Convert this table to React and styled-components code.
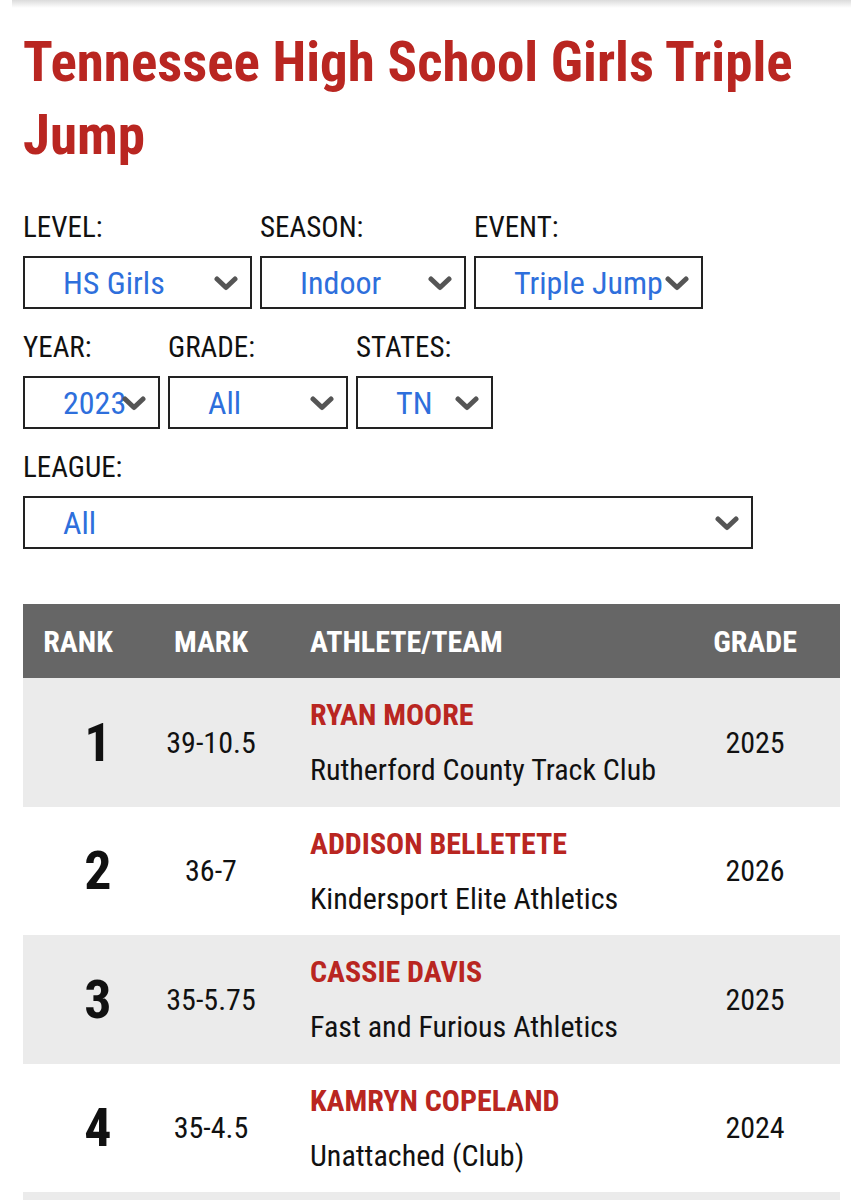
import React from 'react';
import styled, { createGlobalStyle } from 'styled-components';

const GlobalStyle = createGlobalStyle`
  body {
    margin: 0;
    background: #fff;
    font-family: "Roboto Condensed", Roboto, "Liberation Sans", sans-serif;
    font-stretch: condensed;
    color: #111;
  }
`;

const Shade = styled.div`
  height: 8px;
  margin: 0 12px;
  background: linear-gradient(to bottom, rgba(0, 0, 0, 0.14), rgba(0, 0, 0, 0));
`;

const Page = styled.div`
  padding: 0 23px 40px;
`;

const Title = styled.h1`
  margin: 18px 0 0;
  font-size: 55px;
  line-height: 73px;
  font-weight: 700;
  color: #b92621;
`;

const FilterRow = styled.div`
  display: flex;
  gap: 8px;
  margin-top: ${(p) => p.top}px;
`;

const Field = styled.div`
  display: flex;
  flex-direction: column;
  width: ${(p) => p.width}px;
`;

const Label = styled.div`
  font-size: 29px;
  line-height: 30px;
  color: #111;
  margin-bottom: 14px;
`;

const Select = styled.div`
  position: relative;
  height: 53px;
  box-sizing: border-box;
  border: 2px solid #222;
  display: flex;
  align-items: center;
  padding-left: 38px;
  font-size: 32px;
  color: #2e6fdc;
  white-space: nowrap;
  overflow: hidden;
`;

const Chevron = styled.svg`
  position: absolute;
  right: 12px;
  top: 50%;
  margin-top: -7px;
  width: 24px;
  height: 15px;
`;

const Table = styled.div`
  margin-top: 55px;
`;

const Grid = styled.div`
  display: grid;
  grid-template-columns: 120px 136px 391px 1fr;
  align-items: center;
  background: ${(p) => p.bg};
  height: ${(p) => p.h}px;
`;

const Th = styled.div`
  color: #fff;
  font-weight: 700;
  font-size: 30px;
  text-align: ${(p) => (p.left ? 'left' : 'center')};
  padding-left: ${(p) => p.pad || 0}px;
  padding-right: ${(p) => p.padR || 0}px;
`;

const Rank = styled.div`
  font-size: 54px;
  font-weight: 700;
  text-align: center;
  padding-left: 30px;
`;

const Cell = styled.div`
  font-size: 30px;
  text-align: center;
`;

const Athlete = styled.div`
  padding-left: 31px;
  display: flex;
  flex-direction: column;
  gap: 20px;
`;

const Name = styled.div`
  color: #b92621;
  font-weight: 700;
  font-size: 30px;
  line-height: 35px;
  text-transform: uppercase;
`;

const Team = styled.div`
  font-size: 30px;
  line-height: 35px;
`;

const ChevronIcon = () => (
  <Chevron viewBox="0 0 24 15">
    <polyline points="3,3 12,11.5 21,3" fill="none" stroke="#555" strokeWidth="5" strokeLinecap="round" strokeLinejoin="round" />
  </Chevron>
);

const Dropdown = ({ label, value, width }) => (
  <Field width={width}>
    <Label>{label}</Label>
    <Select>
      {value}
      <ChevronIcon />
    </Select>
  </Field>
);

const rows = [
  { rank: 1, mark: '39-10.5', name: 'Ryan Moore', team: 'Rutherford County Track Club', grade: 2025 },
  { rank: 2, mark: '36-7', name: 'Addison Belletete', team: 'Kindersport Elite Athletics', grade: 2026 },
  { rank: 3, mark: '35-5.75', name: 'Cassie Davis', team: 'Fast and Furious Athletics', grade: 2025 },
  { rank: 4, mark: '35-4.5', name: 'Kamryn Copeland', team: 'Unattached (Club)', grade: 2024 },
  { rank: 5, mark: '', name: '', team: '', grade: '' },
];

export default function App() {
  return (
    <>
      <GlobalStyle />
      <Shade />
      <Page>
        <Title>Tennessee High School Girls Triple Jump</Title>
        <FilterRow top={40}>
          <Dropdown label="LEVEL:" value="HS Girls" width={229} />
          <Dropdown label="SEASON:" value="Indoor" width={206} />
          <Dropdown label="EVENT:" value="Triple Jump" width={229} />
        </FilterRow>
        <FilterRow top={23}>
          <Dropdown label="YEAR:" value="2023" width={137} />
          <Dropdown label="GRADE:" value="All" width={180} />
          <Dropdown label="STATES:" value="TN" width={137} />
        </FilterRow>
        <FilterRow top={23}>
          <Dropdown label="LEAGUE:" value="All" width={730} />
        </FilterRow>
        <Table>
          <Grid bg="#666" h={74}>
            <Th padR={10}>RANK</Th>
            <Th>MARK</Th>
            <Th left pad={31}>ATHLETE/TEAM</Th>
            <Th>GRADE</Th>
          </Grid>
          {rows.map((r, i) => (
            <Grid key={r.rank} bg={i % 2 === 0 ? '#ebebeb' : '#fff'} h={128.5}>
              <Rank>{r.mark && r.rank}</Rank>
              <Cell>{r.mark}</Cell>
              <Athlete>
                <Name>{r.name}</Name>
                <Team>{r.team}</Team>
              </Athlete>
              <Cell>{r.grade}</Cell>
            </Grid>
          ))}
        </Table>
      </Page>
    </>
  );
}
